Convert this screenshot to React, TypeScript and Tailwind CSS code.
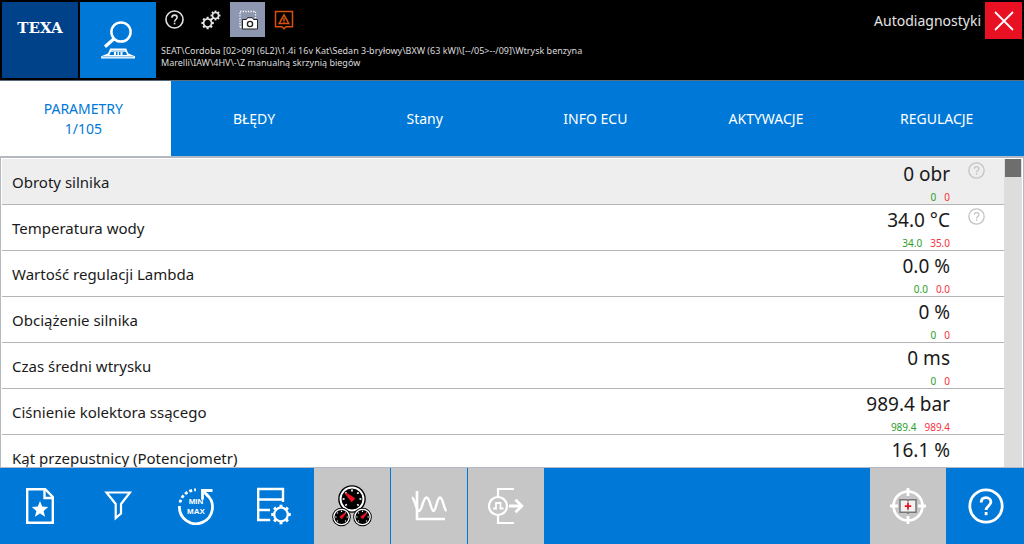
import type { ReactNode } from 'react'

interface Param {
  name: string
  value: string
  min?: string
  max?: string
  help?: boolean
}

const TABS = ['PARAMETRY', 'BŁĘDY', 'Stany', 'INFO ECU', 'AKTYWACJE', 'REGULACJE']

const PARAMS: Param[] = [
  { name: 'Obroty silnika', value: '0 obr', min: '0', max: '0', help: true },
  { name: 'Temperatura wody', value: '34.0 °C', min: '34.0', max: '35.0', help: true },
  { name: 'Wartość regulacji Lambda', value: '0.0 %', min: '0.0', max: '0.0' },
  { name: 'Obciążenie silnika', value: '0 %', min: '0', max: '0' },
  { name: 'Czas średni wtrysku', value: '0 ms', min: '0', max: '0' },
  { name: 'Ciśnienie kolektora ssącego', value: '989.4 bar', min: '989.4', max: '989.4' },
  { name: 'Kąt przepustnicy (Potencjometr)', value: '16.1 %' },
]

function HelpIcon({ size, stroke }: { size: number; stroke: number }) {
  return (
    <svg width={size} height={size} viewBox="0 0 36 36" fill="none" stroke="currentColor" strokeWidth={stroke}>
      <circle cx="18" cy="18" r="16.2" />
      <path d="M13.2 14.500c0-3 2-4.800 4.900-4.800s4.800 1.800 4.800 4.400c0 3.700-4.800 4.100-4.800 8" />
      <path d="M18.1 24v3.200" />
    </svg>
  )
}

// toothed ring, reused by the settings icons
function Gear({ x, y, r, w }: { x: number; y: number; r: number; w: number }) {
  return (
    <g transform={`translate(${x} ${y})`} stroke="currentColor" fill="none">
      <circle r={r} strokeWidth={w} />
      {[0, 45, 90, 135, 180, 225, 270, 315].map((a) => (
        <path key={a} d={`M0 ${-r}v${-w * 1.3}`} strokeWidth={w * 1.3} transform={`rotate(${a})`} />
      ))}
    </g>
  )
}

function Gauge({ x, y, r, angle }: { x: number; y: number; r: number; angle: number }) {
  return (
    <g transform={`translate(${x} ${y})`}>
      <circle r={r} fill="#000" />
      <circle r={r * 0.83} fill="none" stroke="#fff" strokeWidth={r * 0.14} />
      {[0, 45, 90, 135, 225, 270, 315].map((a) => (
        <path key={a} d={`M0 ${-r * 0.68}v${r * 0.14}`} stroke="#fff" strokeWidth={r * 0.12} transform={`rotate(${a})`} />
      ))}
      <path
        d={`M${-r * 0.12} ${r * 0.08}L0 ${-r * 0.56}L${r * 0.12} ${r * 0.08}Z`}
        fill="#e81123"
        stroke="#e81123"
        strokeWidth={r * 0.14}
        strokeLinejoin="round"
        transform={`rotate(${angle})`}
      />
    </g>
  )
}

function ToolButton({ label, disabled, children }: { label: string; disabled?: boolean; children: ReactNode }) {
  return (
    <button
      aria-label={label}
      className={`flex h-[76px] w-[76px] items-center justify-center text-white ${disabled ? 'bg-[#c6c6c6]' : 'bg-[#0078d7]'}`}
    >
      {children}
    </button>
  )
}

function Header() {
  return (
    <header className="flex items-start border-b border-[#5a6a78] bg-black p-0.5">
      <div className="flex h-[76px] w-[76px] shrink-0 justify-center bg-[#00428a] pt-4 font-['DejaVu_Serif',serif] text-[15px] leading-5 font-bold text-white">
        TEXA
      </div>
      <button aria-label="Szukaj pojazdu" className="ml-0.5 flex h-[76px] w-[76px] shrink-0 items-center justify-center bg-[#0078d7] text-white">
        <svg width="36" height="40" viewBox="0 0 36 40" fill="none" stroke="currentColor">
          <circle cx="21" cy="12" r="9.600" strokeWidth="2.500" />
          <path d="M14 18.800L5 26.800" strokeWidth="3.200" />
          <path d="M1.200 38.500v-2.300L8 33.500l2.200-5h16l2.200 5 6.600 2.700v2.300z" fill="currentColor" stroke="none" />
          <path d="M11.200 31h14M2.500 36.800h31" stroke="#0078d7" strokeWidth="0.600" />
          <path d="M10.500 32h3.500v3h-4.500zM16 32h1.500v3H16zM19 32h1.500v3H19zM22.500 32h3.500l1 3h-4.500z" fill="#0078d7" stroke="none" />
        </svg>
      </button>
      <div className="min-w-0 flex-1">
        <div className="flex gap-px text-[#e4e4e4]">
          <button aria-label="Pomoc" className="flex h-[35px] w-9 items-center justify-center">
            <HelpIcon size={19} stroke={3} />
          </button>
          <button aria-label="Ustawienia" className="flex h-[35px] w-9 items-center justify-center">
            <svg width="20" height="20" viewBox="0 0 20 20">
              <Gear x={6.600} y={13} r={4} w={1.700} />
              <Gear x={14.500} y={5.500} r={3} w={1.500} />
            </svg>
          </button>
          <button aria-label="Zrzut ekranu" className="flex h-[35px] w-[35px] items-center justify-center bg-[#8e97b0]">
            <svg width="20" height="20" viewBox="0 0 20 20" fill="none">
              <path d="M2 17V1.500h15.500v7M2 17h3" stroke="#fff" strokeWidth="1.300" strokeDasharray="1.300 1.300" />
              <path d="M4.500 9.500h4l1-1.800h5l1 1.800h4V19h-15z" fill="#fff" stroke="#222" strokeWidth="1" />
              <circle cx="12" cy="14" r="2.600" stroke="#222" strokeWidth="1.400" />
            </svg>
          </button>
          <button aria-label="Ostrzeżenie" className="flex h-[35px] w-9 items-center justify-center text-[#d9500b]">
            <svg width="20" height="20" viewBox="0 0 20 20" fill="none" stroke="currentColor" strokeWidth="1.500">
              <path d="M1.500 1.500h17v15.200h-6.500l-2 2-2-2H1.500z" />
              <path d="M10 4.800l4.800 8.800H5.200z" />
              <path d="M10 8v3M10 11.500v1.200" />
            </svg>
          </button>
        </div>
        <p className="mt-2 pl-[5px] text-[9px] leading-3 text-[#dcdcdc]">
          SEAT\Cordoba [02&gt;09] (6L2)\1.4i 16v Kat\Sedan 3-bryłowy\BXW (63 kW)\[--/05&gt;--/09]\Wtrysk benzyna
          <br />
          Marelli\IAW\4HV\-\Z manualną skrzynią biegów
        </p>
      </div>
      <div className="flex items-center gap-1">
        <span className="text-sm text-[#e4e4e4]">Autodiagnostyki</span>
        <button aria-label="Zamknij" className="flex h-[37px] w-[37px] items-center justify-center bg-[#e81123] text-white">
          <svg width="20" height="20" viewBox="0 0 20 20" stroke="currentColor" strokeWidth="1.800">
            <path d="M1 1l18 18M19 1L1 19" />
          </svg>
        </button>
      </div>
    </header>
  )
}

function Tabs() {
  return (
    <nav role="tablist" className="grid grid-cols-6 bg-[#0078d7]">
      {TABS.map((tab, i) => (
        <button
          key={tab}
          role="tab"
          aria-selected={i === 0}
          className={`h-[75px] pr-1 text-sm leading-5 ${i === 0 ? 'bg-white text-[#0078d7]' : 'text-white'}`}
        >
          {tab}
          {i === 0 && <span className="block">1/105</span>}
        </button>
      ))}
    </nav>
  )
}

function ParamList() {
  return (
    <main className="flex min-h-0 flex-1 overflow-hidden border border-t-2 border-[#b4b8c0] bg-white px-px pt-px">
      <div className="min-w-0 flex-1 overflow-hidden">
        <table className="w-full border-separate border-spacing-0 text-[#1a1a1a]">
          <tbody>
            {PARAMS.map((p, i) => (
              <tr key={p.name} className={i === 0 ? 'bg-[#eeeeee]' : 'bg-white'}>
                <th scope="row" className="border-b border-[#b4b4b4] pl-2.5 text-left text-[15px] leading-5 font-normal">
                  {p.name}
                </th>
                <td className="h-[46px] border-b border-[#b4b4b4] text-right">
                  <div className="text-[19px] leading-[31px]">{p.value}</div>
                  <div className="flex h-3.5 justify-end gap-2 text-[10px] leading-3.5">
                    <span className="text-[#2ca02c]">{p.min}</span>
                    <span className="text-[#f5333f]">{p.max}</span>
                  </div>
                </td>
                <td className="w-[54px] border-b border-[#b4b4b4] pt-[3px] pl-[18px] align-top text-[#c4c4c4]">
                  {p.help && (
                    <button aria-label={`Pomoc: ${p.name}`} className="block">
                      <HelpIcon size={17} stroke={2.8} />
                    </button>
                  )}
                </td>
              </tr>
            ))}
          </tbody>
        </table>
      </div>
      <div className="w-[18px] bg-[#dddddd] px-px">
        <div className="h-[18px] bg-[#6e6e6e]" />
      </div>
    </main>
  )
}

function Toolbar() {
  return (
    <footer className="flex bg-[#0078d7] pl-0.5">
      <div className="flex gap-0.5 pr-0.5">
        <ToolButton label="Ulubione">
          <svg width="28" height="36" viewBox="0 0 28 36" fill="none" stroke="currentColor" strokeWidth="2.400">
            <path d="M1.200 1.200h18L26.800 9v25.800H1.200z" />
            <path d="M18.500 1.500V10h8" />
            <path d="M14 13l2.200 5.600 6 .4-4.600 3.900 1.500 5.900-5.100-3.200-5.100 3.200 1.500-5.900L5.800 19l6-.4z" fill="currentColor" stroke="none" />
          </svg>
        </ToolButton>
        <ToolButton label="Filtr">
          <svg width="28" height="30" viewBox="0 0 28 30" fill="none" stroke="currentColor" strokeWidth="2.200">
            <path d="M2.500 1.500h23.500L17 13v9.500L11.700 27V13z" />
          </svg>
        </ToolButton>
        <ToolButton label="Min Max">
          <svg width="38" height="38" viewBox="0 0 38 38" fill="none" stroke="currentColor" strokeWidth="2.800">
            <path d="M3 15.500A16.500 16.500 0 0 1 19 2.800" strokeDasharray="3 2" />
            <path d="M2.500 19A16.500 16.500 0 1 0 29.500 7.500" />
            <path d="M25.500 12.500V3.500h10" />
            <path d="M25.500 3.500l6 6" />
            <g className="font-['Liberation_Sans',sans-serif]" fontSize="8" fontWeight="700" textAnchor="middle" fill="currentColor" stroke="none">
              <text x="19" y="17">MIN</text>
              <text x="19" y="27">MAX</text>
            </g>
          </svg>
        </ToolButton>
        <ToolButton label="Ustawienia listy">
          <svg width="36" height="38" viewBox="0 0 36 38" fill="none" stroke="currentColor" strokeWidth="2.400">
            <path d="M27 15V2H2.200v31h12M2.200 12.500H27M2.200 23H14" />
            <Gear x={25} y={27.500} r={6.800} w={2.300} />
          </svg>
        </ToolButton>
      </div>
      <div className="flex gap-px">
        <ToolButton label="Wskaźniki" disabled>
          <svg width="40" height="42" viewBox="0 0 40 42">
            <Gauge x={20} y={14} r={13.8} angle={-48} />
            <Gauge x={9.5} y={32} r={9.3} angle={45} />
            <Gauge x={30.5} y={32} r={9.3} angle={45} />
          </svg>
        </ToolButton>
        <ToolButton label="Wykres" disabled>
          <svg width="36" height="32" viewBox="0 0 36 32" fill="none" stroke="currentColor" strokeWidth="2.400">
            <path d="M6 1v28h28" strokeWidth="2.600" />
            <path d="M1 7.500c3 1 4 13.500 7 13.500s4-13.500 7.500-13.500S20 21 22.500 21 26 7.500 29 7.500 33 20 35.500 21" />
          </svg>
        </ToolButton>
        <ToolButton label="Aktywacja" disabled>
          <svg width="36" height="38" viewBox="0 0 36 38" fill="none" stroke="currentColor" strokeWidth="2.200">
            <circle cx="10" cy="19" r="9" />
            <path d="M10 10V2h16M10 28v8h16" />
            <path d="M5 21.500h3v-5.500h4.500v5.500h3" strokeWidth="1.800" />
            <path d="M21 19h13M27.500 12.800l6.300 6.200-6.300 6.200" strokeWidth="2.800" />
          </svg>
        </ToolButton>
      </div>
      <div className="ml-auto flex gap-0.5">
        <ToolButton label="Instrukcja" disabled>
          <svg width="36" height="36" viewBox="0 0 36 36" fill="none">
            <circle cx="18" cy="18" r="14.500" stroke="#fff" strokeWidth="2.600" />
            <path d="M18 0v8M18 28v8M0 18h8M28 18h8" stroke="#fff" strokeWidth="2.800" />
            <path d="M10 11.800h7l1 1 1-1h7v12.500h-7l-1 1-1-1h-7z" fill="#f2f2f2" stroke="#777" strokeWidth="1.500" />
            <path d="M18 13v11" stroke="#aaa" strokeWidth="1" />
            <path d="M18 14.800v6.800M14.800 18.200h6.400" stroke="#e81123" strokeWidth="1.700" />
          </svg>
        </ToolButton>
        <ToolButton label="Pomoc">
          <HelpIcon size={36} stroke={2.8} />
        </ToolButton>
      </div>
    </footer>
  )
}

export default function App() {
  return (
    <div className="flex h-screen flex-col overflow-hidden font-['Noto_Sans',sans-serif]">
      <Header />
      <Tabs />
      <ParamList />
      <Toolbar />
    </div>
  )
}
